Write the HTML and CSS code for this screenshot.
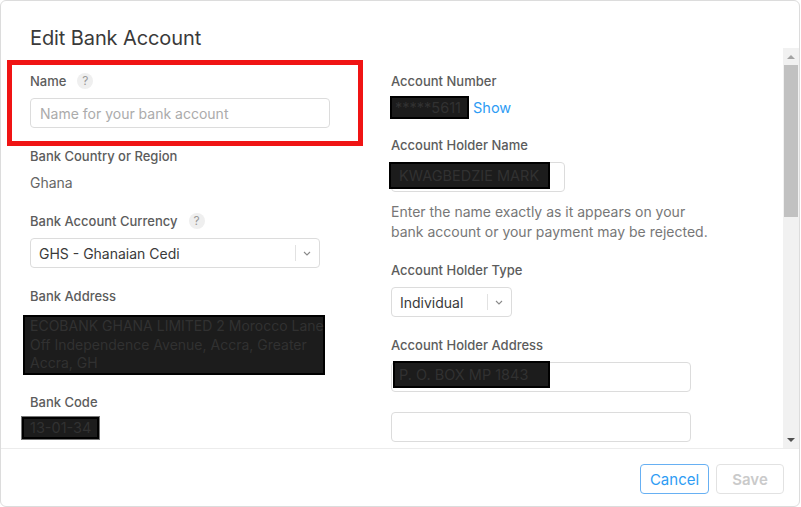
FILE: index.html
```html
<!DOCTYPE html>
<html lang="en">
<head>
<meta charset="utf-8">
<title>Edit Bank Account</title>
<link rel="stylesheet" href="styles.css">
</head>
<body>
<div class="modal">
  <header class="modal-header">
    <h1 class="title">Edit Bank Account</h1>
  </header>
  <div class="modal-body">
    <div class="form">
      <div class="col">
        <div class="field">
          <div class="label">Name <span class="help">?</span></div>
          <input class="input" type="text" placeholder="Name for your bank account">
        </div>
        <div class="field">
          <div class="label">Bank Country or Region</div>
          <div class="value">Ghana</div>
        </div>
        <div class="field">
          <div class="label">Bank Account Currency <span class="help">?</span></div>
          <div class="select select-wide">
            <span class="select-text">GHS - Ghanaian Cedi</span>
            <span class="select-divider"></span>
            <svg class="chevron" width="8" height="5" viewBox="0 0 8 5"><path d="M1 1l3 3 3-3" fill="none" stroke="#8a8a8a" stroke-width="1.1"/></svg>
          </div>
        </div>
        <div class="field field-address">
          <div class="label">Bank Address</div>
          <div class="redact redact-block">ECOBANK GHANA LIMITED 2 Morocco Lane<br>Off Independence Avenue, Accra, Greater<br>Accra, GH</div>
        </div>
        <div class="field">
          <div class="label label-tight">Bank Code</div>
          <div class="redact redact-code">13-01-34</div>
        </div>
      </div>
      <div class="col">
        <div class="field field-number">
          <div class="label label-tight">Account Number</div>
          <div class="value-row">
            <span class="redact redact-number">*****5611</span>
            <a class="link" href="#">Show</a>
          </div>
        </div>
        <div class="field">
          <div class="label">Account Holder Name</div>
          <div class="input input-box input-name">
            <span class="redact redact-over redact-name">KWAGBEDZIE MARK</span>
          </div>
          <p class="helper">Enter the name exactly as it appears on your<br>bank account or your payment may be rejected.</p>
        </div>
        <div class="field">
          <div class="label">Account Holder Type</div>
          <div class="select select-narrow">
            <span class="select-text">Individual</span>
            <span class="select-divider"></span>
            <svg class="chevron" width="8" height="5" viewBox="0 0 8 5"><path d="M1 1l3 3 3-3" fill="none" stroke="#8a8a8a" stroke-width="1.1"/></svg>
          </div>
        </div>
        <div class="field">
          <div class="label">Account Holder Address</div>
          <div class="input input-box input-address">
            <span class="redact redact-over redact-addr">P. O. BOX MP 1843</span>
          </div>
          <input class="input input-address input-second" type="text">
        </div>
      </div>
    </div>
    <div class="scrollbar">
      <div class="sb-btn"><span class="tri tri-up"></span></div>
      <div class="sb-track"><div class="sb-thumb"></div></div>
      <div class="sb-btn"><span class="tri tri-down"></span></div>
    </div>
  </div>
  <footer class="modal-footer">
    <button class="btn btn-cancel" type="button">Cancel</button>
    <button class="btn btn-save" type="button">Save</button>
  </footer>
  <div class="annotation"></div>
</div>
</body>
</html>
```
FILE: styles.css
```css
* { box-sizing: border-box; }

html, body {
  margin: 0;
  padding: 0;
  background: #ffffff;
}

body {
  font-family: Inter, "Liberation Sans", Arial, sans-serif;
  color: #333;
  width: 801px;
  height: 507px;
  overflow: hidden;
}

.modal {
  position: relative;
  width: 800px;
  height: 507px;
  border: 1px solid #dcdcdc;
  border-radius: 6px;
  background: #fff;
  display: flex;
  flex-direction: column;
  overflow: hidden;
}

.modal-header {
  height: 47px;
  flex: none;
  padding: 26px 0 0 29px;
}

.title {
  margin: 0;
  font-size: 20px;
  line-height: 22px;
  font-weight: 400;
  color: #3a3a3a;
  letter-spacing: -0.1px;
}

.modal-body {
  height: 400px;
  flex: none;
  display: flex;
}

.form {
  flex: 1;
  overflow: hidden;
  display: grid;
  grid-template-columns: 300px 300px;
  column-gap: 61px;
  align-items: start;
  padding: 24px 0 0 29px;
}

.col {
  display: flex;
  flex-direction: column;
}

.field {
  margin-bottom: 19px;
}

.label {
  display: flex;
  align-items: center;
  height: 18px;
  font-size: 13px;
  line-height: 18px;
  font-weight: 500;
  color: #5c5c5c;
  margin-bottom: 8px;
}

.label-tight { margin-bottom: 6px; }

.help {
  display: inline-flex;
  align-items: center;
  justify-content: center;
  width: 16px;
  height: 16px;
  margin-left: 11px;
  border-radius: 50%;
  background: #efefef;
  color: #9a9a9a;
  font-size: 12px;
  font-weight: 400;
}

.input {
  display: block;
  width: 300px;
  height: 30px;
  margin: 0;
  padding: 0 9px;
  border: 1px solid #dcdcdc;
  border-radius: 4px;
  background: #fff;
  font-family: inherit;
  font-size: 14px;
  color: #333;
  outline: none;
}

.input::placeholder { color: #ababab; }

.input-box { position: relative; }

.input-name { width: 174px; }

.input-second { margin-top: 20px; }

.value {
  font-size: 14px;
  line-height: 20px;
  color: #666;
}

.select {
  display: flex;
  align-items: center;
  height: 30px;
  border: 1px solid #dcdcdc;
  border-radius: 4px;
  background: #fff;
  font-size: 14px;
  color: #3a3a3a;
  padding-left: 8px;
}

.select-wide { width: 290px; }
.select-narrow { width: 121px; }

.select-text { flex: 1; white-space: nowrap; }

.select-divider {
  width: 1px;
  height: 16px;
  background: #e2e2e2;
}

.chevron {
  margin: 0 8px 0 7px;
}

.redact {
  background: #1c1c1c;
  border: 2px solid #000;
  color: #313131;
  font-size: 14px;
  white-space: nowrap;
}

.redact-block {
  width: 302px;
  margin: 10px 0 0 -7px;
  padding-left: 5px;
  line-height: 18.5px;
  font-size: 14px;
  overflow: visible;
}

.field-address { margin-bottom: 18px; }

.redact-code {
  display: inline-block;
  width: 77px;
  margin-left: -8px;
  padding-left: 6px;
  line-height: 18px;
  font-size: 14.5px;
  box-shadow: 0 0 0 1px #777;
}

.field-number { margin-bottom: 17px; }

.value-row {
  display: flex;
  align-items: center;
  height: 23px;
}

.redact-number {
  display: inline-block;
  width: 79px;
  height: 23px;
  margin-left: -1px;
  padding-left: 3px;
  line-height: 19px;
  font-size: 14.5px;
  overflow: hidden;
}

.link {
  margin-left: 4px;
  font-size: 14.5px;
  color: #2e9cf4;
  text-decoration: none;
}

.redact-over {
  position: absolute;
  line-height: 23px;
  font-size: 14.5px;
}

.redact-name {
  left: -3px;
  top: -1px;
  width: 161px;
  height: 27px;
  padding-left: 8px;
}

.redact-addr {
  left: 1px;
  top: -2px;
  width: 157px;
  height: 27px;
  padding-left: 4px;
}

.helper {
  margin: 10px 0 0;
  width: 330px;
  font-size: 14px;
  line-height: 20px;
  color: #777;
}

.scrollbar {
  width: 16px;
  flex: none;
  display: flex;
  flex-direction: column;
  background: #f1f1f1;
}

.sb-btn {
  height: 17px;
  display: flex;
  align-items: center;
  justify-content: center;
}

.tri {
  width: 0;
  height: 0;
  border-left: 4px solid transparent;
  border-right: 4px solid transparent;
}

.tri-up { border-bottom: 4px solid #a3a3a3; }
.tri-down { border-top: 4px solid #505050; }

.sb-track {
  flex: 1;
  padding: 0 1px;
}

.sb-thumb {
  height: 152px;
  background: #c1c1c1;
}

.modal-footer {
  flex: 1;
  border-top: 1px solid #ececec;
  display: flex;
  justify-content: flex-end;
  align-items: flex-start;
  gap: 7px;
  padding: 15px 15px 0 0;
}

.btn {
  height: 30px;
  margin: 0;
  padding: 0;
  border-radius: 4px;
  background: #fff;
  font-family: inherit;
  font-size: 15px;
}

.btn-cancel {
  width: 69px;
  border: 1px solid #67b0f3;
  color: #2e9cf4;
}

.btn-save {
  width: 68px;
  border: 1px solid #e2e2e2;
  color: #cacaca;
  font-weight: 600;
}

.annotation {
  position: absolute;
  left: 6px;
  top: 59px;
  width: 356px;
  height: 86px;
  border: 5px solid #f01414;
  pointer-events: none;
}
```
